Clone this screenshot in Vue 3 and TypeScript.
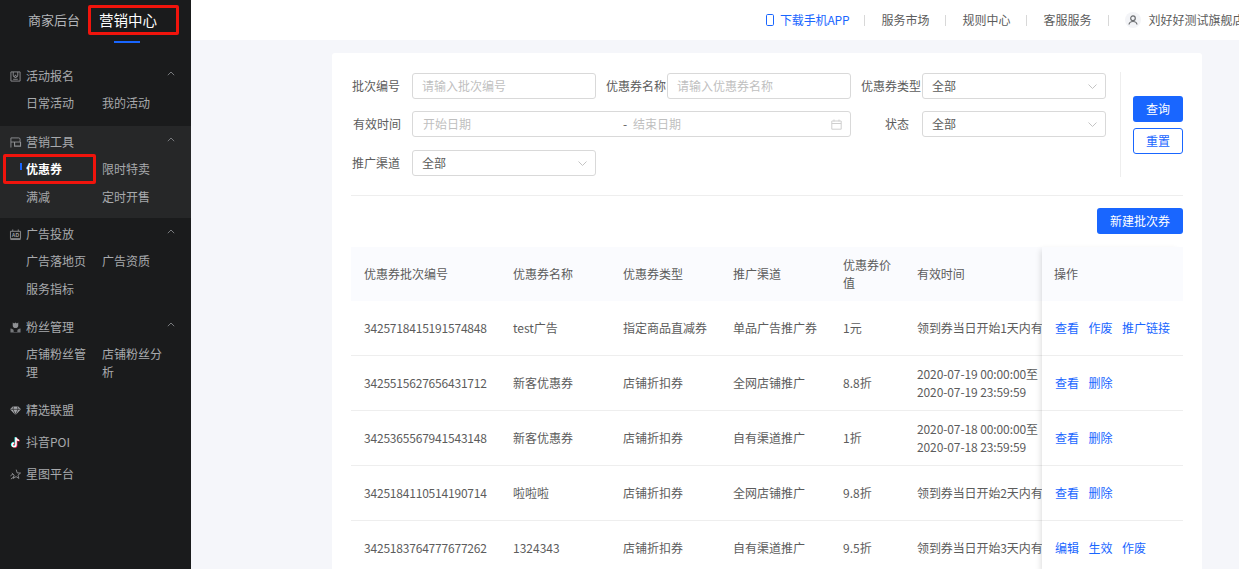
<script setup lang="ts">
interface MenuGroup { title: string; icon: string; items: string[]; active?: boolean; pad: number }
const groups: MenuGroup[] = [
  { title: '活动报名', icon: 'a', items: ['日常活动', '我的活动'], pad: 9 },
  { title: '营销工具', icon: 'b', items: ['优惠券', '限时特卖', '满减', '定时开售'], active: true, pad: 7 },
  { title: '广告投放', icon: 'c', items: ['广告落地页', '广告资质', '服务指标'], pad: 8 },
  { title: '粉丝管理', icon: 'd', items: ['店铺粉丝管理', '店铺粉丝分析'], pad: 8 },
  { title: '精选联盟', icon: 'e', items: [], pad: 6 },
  { title: '抖音POI', icon: 'f', items: [], pad: 6 },
  { title: '星图平台', icon: 'g', items: [], pad: 6 }
]
const heads = ['优惠券批次编号', '优惠券名称', '优惠券类型', '推广渠道', '优惠券价值', '有效时间']
const rows = [
  { id: '3425718415191574848', name: 'test广告', type: '指定商品直减券', channel: '单品广告推广券', value: '1元', time: ['领到券当日开始1天内有效'], ops: ['查看', '作废', '推广链接'] },
  { id: '3425515627656431712', name: '新客优惠券', type: '店铺折扣券', channel: '全网店铺推广', value: '8.8折', time: ['2020-07-19 00:00:00至', '2020-07-19 23:59:59'], ops: ['查看', '删除'] },
  { id: '3425365567941543148', name: '新客优惠券', type: '店铺折扣券', channel: '自有渠道推广', value: '1折', time: ['2020-07-18 00:00:00至', '2020-07-18 23:59:59'], ops: ['查看', '删除'] },
  { id: '3425184110514190714', name: '啦啦啦', type: '店铺折扣券', channel: '全网店铺推广', value: '9.8折', time: ['领到券当日开始2天内有效'], ops: ['查看', '删除'] },
  { id: '3425183764777677262', name: '1324343', type: '店铺折扣券', channel: '自有渠道推广', value: '9.5折', time: ['领到券当日开始3天内有效'], ops: ['编辑', '生效', '作废'] }
]
const links = ['服务市场', '规则中心', '客服服务']
</script>

<template>
  <div class="page">
    <aside class="side">
      <div class="tabs">
        <span class="tab">商家后台</span>
        <span class="tab on">营销中心</span>
        <i class="mark top-mark"></i>
      </div>
      <nav class="menu">
        <section v-for="g in groups" :key="g.title" class="group" :class="{ shaded: g.active }" :style="{ paddingBottom: g.pad + 'px' }">
          <div class="title">
            <svg class="ico" viewBox="0 0 12 12" fill="none" stroke="#8f9194" stroke-width="1">
              <template v-if="g.icon === 'a'">
                <path d="M1 1h10v10H1z" /><path d="M3.500 1v3.500a2.500 2.500 0 0 0 5 0V1" /><path d="M6 4.200l1 1.800-1 1.200-1-1.200z" /><path d="M3.500 9h5" />
              </template>
              <template v-else-if="g.icon === 'b'">
                <path d="M1 11.500V1h8.500a1.500 1.500 0 0 1 1.500 1.500V5.500H1" /><path d="M5 5.500v4.500h6.500V5.500" stroke-width="1.200" />
              </template>
              <template v-else-if="g.icon === 'c'">
                <path d="M.5 2.500h11v8h-11z" /><path d="M3 .5v2M9 .5v2M.5 11.500h11" /><text x="6" y="8.800" text-anchor="middle" font-size="5.500" font-weight="700" fill="#a0a2a5" stroke="none" font-family="Liberation Sans, sans-serif">AD</text>
              </template>
              <template v-else-if="g.icon === 'd'">
                <path d="M3 .5l1.500 1L6 .5l1.500 1L9 .5v3.500C9 5.500 7.500 6.500 6 6.500S3 5.500 3 4z" fill="#8f9194" stroke="none" /><path d="M.5 7c2 0 3.500 1 3.500 2.500V11h4V9.500C8 8 9.500 7 11.500 7V11.500H.5z" fill="#75777a" stroke="none" /><path d="M6 6.500V11" stroke="#1a1b1c" />
              </template>
              <template v-else-if="g.icon === 'e'">
                <path d="M3 1.500h6L12 4.700 6 11 0 4.700z" fill="#a5a7aa" stroke="none" /><path d="M.3 4.700h11.400M3.800 1.800L3.300 4.700 6 10.500M8.200 1.800l.5 2.900L6 10.500" stroke="#1a1b1c" stroke-width=".7" />
              </template>
              <template v-else-if="g.icon === 'f'">
                <path d="M6.500.5v8a2 2 0 1 1-2-2M6.500.5c.2 1.900 1.500 3 3.400 3.200" stroke="#25f4ee" stroke-width="1.800" transform="translate(-.7 -.3)" />
                <path d="M6.500.5v8a2 2 0 1 1-2-2M6.500.5c.2 1.900 1.500 3 3.400 3.200" stroke="#fe2c55" stroke-width="1.800" transform="translate(.7 .4)" />
                <path d="M6.500.5v8a2 2 0 1 1-2-2M6.500.5c.2 1.900 1.500 3 3.400 3.200" stroke="#fff" stroke-width="1.600" />
              </template>
              <template v-else>
                <path d="M6.800.7l1 3.500 3.700.2-2.800 2.300 1 3.600-3.100-2-3.100 2 1-3.600L2 4.400" /><path d="M.5 7.500l2.800-2.200M1 11l3.500-2.800" />
              </template>
            </svg>
            <span>{{ g.title }}</span>
            <svg v-if="g.items.length" class="up" viewBox="0 0 8 5" fill="none" stroke="#77797c" stroke-width="1"><path d="M.8 4.200L4 1l3.200 3.200" /></svg>
          </div>
          <div v-if="g.items.length" class="items">
            <a v-for="it in g.items" :key="it" class="item" :class="{ current: it === '优惠券' }">{{ it }}</a>
          </div>
          <i v-if="g.active" class="mark coupon-mark"></i>
        </section>
      </nav>
    </aside>

    <div class="main">
      <header class="bar">
        <svg class="phone" viewBox="0 0 8 12" fill="none" stroke="#1966ff" stroke-width="1"><rect x=".5" y=".5" width="7" height="11" rx="1.200" /></svg>
        <span class="dl">下载手机APP</span>
        <template v-for="l in links" :key="l">
          <i class="sep"></i>
          <span class="link">{{ l }}</span>
        </template>
        <i class="sep"></i>
        <span class="avatar">
          <svg viewBox="0 0 10 10" fill="none" stroke="#6b6d70" stroke-width="1.200"><circle cx="5" cy="3.200" r="2.300" /><path d="M1 9.500c.3-2 1.800-3 4-3s3.700 1 4 3" /></svg>
        </span>
        <span class="shop">刘好好测试旗舰店</span>
      </header>

      <main class="content">
        <div class="card">
          <div class="filters">
            <div class="fields">
              <div class="f-row r1">
                <label class="lab w1">批次编号</label>
                <div class="box"><span class="ph">请输入批次编号</span></div>
                <label class="lab w2">优惠券名称</label>
                <div class="box"><span class="ph">请输入优惠券名称</span></div>
                <label class="lab w2">优惠券类型</label>
                <div class="box sel"><span>全部</span><svg viewBox="0 0 9 5" fill="none" stroke="#c4c4c4"><path d="M.5.5L4.500 4.500 8.500.5" /></svg></div>
              </div>
              <div class="f-row r2">
                <label class="lab w1 center">有效时间</label>
                <div class="box date">
                  <span class="ph d1">开始日期</span>
                  <span class="dash">-</span>
                  <span class="ph">结束日期</span>
                  <svg viewBox="0 0 11 11" fill="none" stroke="#cfcfcf"><path d="M.8 2h9.400v8.200H.8zM.8 4.500h9.400M3 .5v2M8 .5v2" /></svg>
                </div>
                <label class="lab w3">状态</label>
                <div class="box sel"><span>全部</span><svg viewBox="0 0 9 5" fill="none" stroke="#c4c4c4"><path d="M.5.5L4.500 4.500 8.500.5" /></svg></div>
              </div>
              <div class="f-row r3">
                <label class="lab w1">推广渠道</label>
                <div class="box sel"><span>全部</span><svg viewBox="0 0 9 5" fill="none" stroke="#c4c4c4"><path d="M.5.5L4.500 4.500 8.500.5" /></svg></div>
              </div>
            </div>
            <div class="actions">
              <button class="btn primary">查询</button>
              <button class="btn ghost">重置</button>
            </div>
          </div>
          <div class="tools"><button class="btn primary create">新建批次券</button></div>
          <div class="table">
            <div class="scroll">
              <div class="tr th">
                <div v-for="h in heads" :key="h" class="td">{{ h }}</div>
              </div>
              <div v-for="r in rows" :key="r.id" class="tr">
                <div class="td code">{{ r.id }}</div>
                <div class="td">{{ r.name }}</div>
                <div class="td">{{ r.type }}</div>
                <div class="td">{{ r.channel }}</div>
                <div class="td">{{ r.value }}</div>
                <div class="td nowrap"><div v-for="t in r.time" :key="t">{{ t }}</div></div>
              </div>
            </div>
            <div class="fixed">
              <div class="op-row th">操作</div>
              <div v-for="r in rows" :key="r.id" class="op-row">
                <a v-for="o in r.ops" :key="o">{{ o }}</a>
              </div>
            </div>
          </div>
        </div>
      </main>
    </div>
  </div>
</template>

<style>
html, body { margin: 0; height: 100%; overflow: hidden; }
</style>

<style scoped>
.page { display: flex; height: 569px; overflow: hidden; font: 12px/18px "Noto Sans CJK SC", "Noto Sans", sans-serif; color: #5c5c5c; }
.side { width: 191px; flex: none; background: #1a1b1c; color: #b4b6b9; }
.tabs { position: relative; height: 60px; display: flex; padding-left: 28px; gap: 19px; box-sizing: border-box; }
.tab { font-size: 13px; line-height: 40px; color: #b4b6b9; }
.tab.on { font-size: 14.500px; color: #fff; position: relative; }
.tab.on::after { content: ""; position: absolute; left: 15px; top: 41px; width: 26px; height: 2px; background: #1966ff; }
.mark { position: absolute; border: 3px solid #f0140c; border-radius: 2px; box-sizing: border-box; }
.top-mark { left: 88px; top: 5px; width: 91px; height: 30px; }
.group { position: relative; padding: 6px 0 7px; }
.group.shaded { background: #262728; }
.coupon-mark { left: 3px; top: 28px; width: 93px; height: 30px; }
.title { display: flex; align-items: center; height: 20px; padding-left: 10px; gap: 5px; color: #a8aaad; }
.ico { width: 11px; height: 11px; flex: none; overflow: visible; }
.up { width: 8px; height: 5px; margin-left: auto; margin-right: 16px; margin-top: -6px; }
.items { display: grid; grid-template-columns: 76px 76px; padding-left: 26px; margin-top: 3px; }
.item { padding: 5px 10px 5px 0; color: #a8aaad; }
.item.current { color: #fff; font-weight: 700; position: relative; }
.item.current::before { content: ""; position: absolute; left: -6px; top: 8px; width: 2px; height: 7px; background: #1966ff; }
.main { flex: 1; min-width: 0; background: #f5f6fa; display: flex; flex-direction: column; }
.bar { height: 40px; flex: none; background: #fff; display: flex; align-items: center; padding-left: 575px; white-space: nowrap; overflow: hidden; }
.phone { width: 8px; height: 12px; flex: none; margin-right: 6px; }
.dl { color: #1966ff; letter-spacing: -0.15px; margin-right: -1px; }
.sep { width: 1px; height: 11px; background: #d8d8d8; flex: none; margin: 0 16px; }
.avatar { width: 16px; height: 16px; border-radius: 50%; background: #f3f4f7; flex: none; margin-right: 8px; display: flex; align-items: center; justify-content: center; }
.avatar svg { width: 10px; height: 10px; }
.shop { flex: none; }
.content { padding: 13px 0 0 141px; }
.card { width: 870px; background: #fff; border-radius: 3px 3px 0 0; box-sizing: border-box; padding: 20px 19px 0 19px; }
.filters { display: flex; height: 122px; border-bottom: 1px solid #eee; }
.fields { width: 769px; }
.f-row { display: flex; align-items: center; height: 26px; }
.r2 { margin-top: 12px; }
.r3 { margin-top: 13px; }
.lab { flex: none; white-space: nowrap; }
.w1 { width: 61px; padding-left: 1px; box-sizing: border-box; }
.center { padding-left: 2px; }
.w2 { width: 61px; margin-left: 10px; }
.w3 { width: 37px; margin-left: 34px; }
.box { width: 184px; height: 26px; flex: none; box-sizing: border-box; border: 1px solid #d9d9d9; border-radius: 3px; padding: 0 8px 0 9px; display: flex; align-items: center; }
.ph { color: #bfbfbf; }
.sel { justify-content: space-between; }
.sel svg { width: 9px; height: 5px; }
.date { width: 439px; padding-left: 10px; }
.d1 { width: 200px; }
.dash { width: 10px; }
.date svg { width: 11px; height: 11px; margin-left: auto; }
.actions { flex: none; width: 63px; height: 105px; margin-top: -1px; padding-top: 1px; box-sizing: border-box; border-left: 1px solid #eee; display: flex; flex-direction: column; align-items: flex-end; justify-content: center; gap: 6px; }
.btn { width: 50px; height: 26px; font: inherit; border-radius: 3px; padding: 0; box-sizing: border-box; }
.primary { background: #1966ff; border: 0; color: #fff; }
.ghost { background: #fff; border: 1px solid #1966ff; color: #1966ff; }
.tools { display: flex; justify-content: flex-end; padding: 12px 0 13px; }
.create { width: 86px; }
.table { display: flex; }
.scroll { width: 691px; overflow: hidden; flex: none; }
.tr { display: grid; grid-template-columns: 162px 110px 110px 110px 74px 125px; height: 55px; align-items: center; border-bottom: 1px solid #eee; box-sizing: border-box; }
.tr.th { height: 54px; background: #fafbfe; border-bottom: 0; }
.td { padding-right: 8px; box-sizing: border-box; }
.tr .td:first-child { padding-left: 13px; white-space: nowrap; }
.tr .td:nth-child(5) { padding-right: 26px; }
.code { letter-spacing: -0.2px; }
.nowrap, .tr.th .td:nth-child(6) { white-space: nowrap; padding-right: 0; letter-spacing: -0.1px; }
.fixed { width: 141px; flex: none; position: relative; background: #fff; box-shadow: -4px 0 6px -3px rgba(0, 0, 0, 0.14); }
.op-row { height: 55px; box-sizing: border-box; border-bottom: 1px solid #eee; display: flex; align-items: center; padding-left: 13px; gap: 9.500px; color: #1966ff; }
.op-row.th { height: 54px; background: #fafbfe; border-bottom: 0; color: #5c5c5c; padding-left: 12px; }
</style>
